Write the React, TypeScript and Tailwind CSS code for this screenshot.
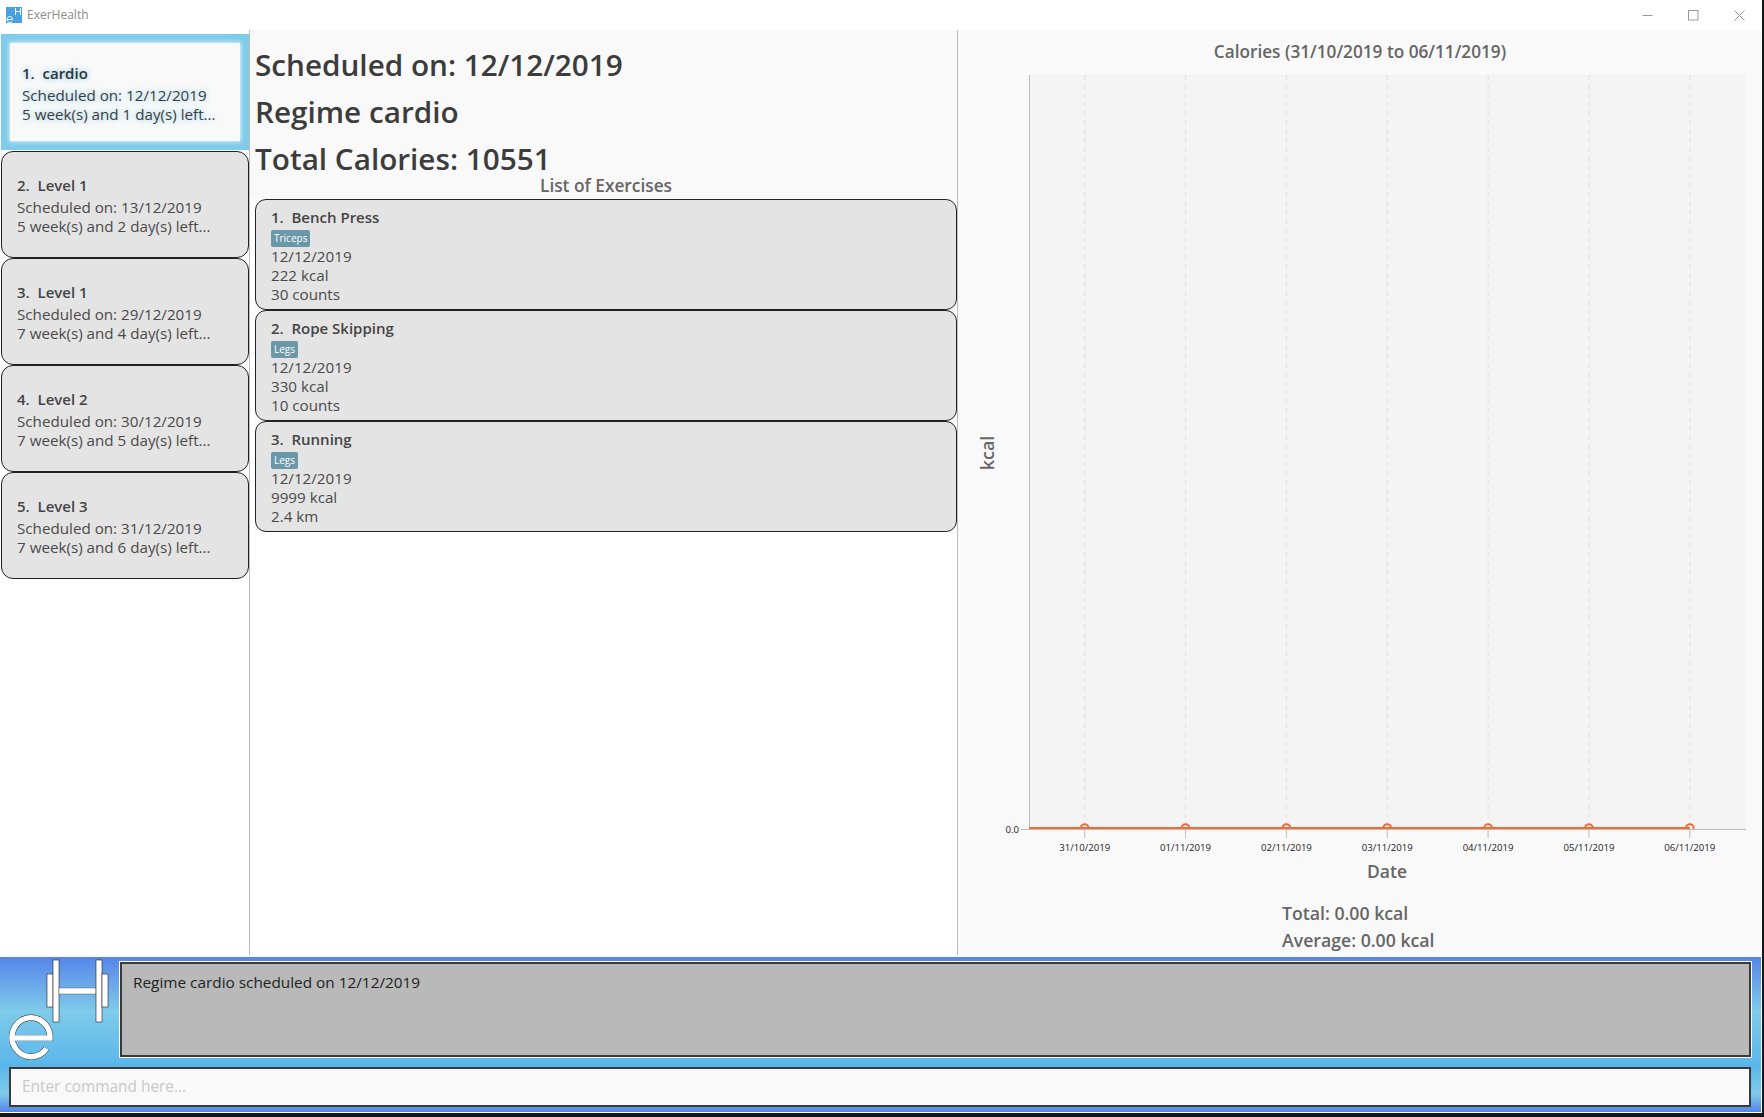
const regimes = [
  { n: "1.", name: "cardio", date: "12/12/2019", left: "5 week(s) and 1 day(s) left..." },
  { n: "2.", name: "Level 1", date: "13/12/2019", left: "5 week(s) and 2 day(s) left..." },
  { n: "3.", name: "Level 1", date: "29/12/2019", left: "7 week(s) and 4 day(s) left..." },
  { n: "4.", name: "Level 2", date: "30/12/2019", left: "7 week(s) and 5 day(s) left..." },
  { n: "5.", name: "Level 3", date: "31/12/2019", left: "7 week(s) and 6 day(s) left..." },
];

const exercises = [
  { n: "1.", name: "Bench Press", tag: "Triceps", date: "12/12/2019", kcal: "222 kcal", qty: "30 counts" },
  { n: "2.", name: "Rope Skipping", tag: "Legs", date: "12/12/2019", kcal: "330 kcal", qty: "10 counts" },
  { n: "3.", name: "Running", tag: "Legs", date: "12/12/2019", kcal: "9999 kcal", qty: "2.4 km" },
];

const days = ["31/10/2019", "01/11/2019", "02/11/2019", "03/11/2019", "04/11/2019", "05/11/2019", "06/11/2019"];

function TitleBar() {
  return (
    <div className="flex h-[30px] items-center bg-white pl-[6px]">
      <svg width="16" height="16" viewBox="0 0 16 16">
        <rect width="16" height="16" fill="#4a9fe0" />
        <path d="M9.5 1V8M14.5 1V8M9.5 4.5H14.5" stroke="#fff" strokeWidth="1" fill="none" />
        <path d="M1 12.5H6.5C6.5 10.5 5.2 9.5 3.8 9.5C2.2 9.5 1 10.8 1 12.5C1 14.2 2.2 15.5 3.8 15.5C4.9 15.5 5.8 15 6.3 14" stroke="#fff" strokeWidth="1" fill="none" />
      </svg>
      <span className="ml-[5px] text-[12px] text-[#8a8a8a]">ExerHealth</span>
      <div className="ml-auto flex items-center gap-[35px] pr-[17px]">
        <svg width="11" height="11" viewBox="0 0 11 11"><path d="M0.5 5.5H10.5" stroke="#999" /></svg>
        <svg width="11" height="11" viewBox="0 0 11 11"><rect x="0.5" y="0.5" width="9.5" height="9.5" fill="none" stroke="#999" /></svg>
        <svg width="11" height="11" viewBox="0 0 11 11"><path d="M0.5 0.5L10.5 10.5M10.5 0.5L0.5 10.5" stroke="#999" /></svg>
      </div>
    </div>
  );
}

function RegimeCard({ r, selected }: { r: (typeof regimes)[number]; selected: boolean }) {
  if (selected) {
    return (
      <div className="ml-[1px] mb-[1px] h-[116px] bg-[#7fcbea] p-[9px]">
        <div className="flex h-full flex-col justify-center bg-[#f9f9f9] pt-[2px] pl-[12px] shadow-[0_0_4px_1px_#d8f0fa]">
          <div className="mb-[2px] text-[15px] leading-[22px] font-semibold text-[#333] [text-shadow:0_0_6px_#6cc3e8]">
            {r.n}&nbsp;&nbsp;{r.name}
          </div>
          <div className="text-[15.2px] leading-[19px] text-[#3d3d3d] [text-shadow:0_0_6px_#7fcbea]">Scheduled on: {r.date}</div>
          <div className="text-[15.2px] leading-[19px] text-[#3d3d3d] [text-shadow:0_0_6px_#7fcbea]">{r.left}</div>
        </div>
      </div>
    );
  }
  return (
    <div className="ml-[1px] flex h-[107px] flex-col justify-center rounded-[12px] border-[1.5px] border-[#222] bg-[#e4e4e4] pl-[15px]">
      <div className="mb-[2px] text-[15px] leading-[22px] font-semibold text-[#444]">
        {r.n}&nbsp;&nbsp;{r.name}
      </div>
      <div className="text-[15.2px] leading-[19px] text-[#4a4a4a]">Scheduled on: {r.date}</div>
      <div className="text-[15.2px] leading-[19px] text-[#4a4a4a]">{r.left}</div>
    </div>
  );
}

function ExerciseCard({ e }: { e: (typeof exercises)[number] }) {
  return (
    <div className="flex h-[111px] flex-col rounded-[11px] border-[1.5px] border-[#222] bg-[#e4e4e4] pt-[7px] pl-[15px]">
      <div className="text-[15px] leading-[20px] font-semibold text-[#444]">
        {e.n}&nbsp;&nbsp;{e.name}
      </div>
      <div className="mt-[3px] flex">
        <span className="rounded-[2px] bg-[#6a98a9] px-[3px] text-[10px] leading-[17px] text-white">{e.tag}</span>
      </div>
      <div className="text-[15.2px] leading-[19px] text-[#4a4a4a]">{e.date}</div>
      <div className="text-[15.2px] leading-[19px] text-[#4a4a4a]">{e.kcal}</div>
      <div className="text-[15.2px] leading-[19px] text-[#4a4a4a]">{e.qty}</div>
    </div>
  );
}

function Chart() {
  return (
    <svg width="804" height="815" viewBox="958 75 804 815" className="block">
      <rect x="1029" y="75" width="717" height="754" fill="#f4f4f4" />
      {days.map((d, i) => {
        const x = 1084.7 + i * 100.85;
        return (
          <g key={d}>
            <line x1={x} y1="75" x2={x} y2="829" stroke="#e0e0e0" strokeDasharray="5 4" />
            <text x={x} y="851" textAnchor="middle" fontSize="9.6" fill="#222">{d}</text>
            <circle cx={x} cy="828" r="3.8" fill="#fff" stroke="#f66a35" strokeWidth="2" />
          </g>
        );
      })}
      <line x1="1029.5" y1="75" x2="1029.5" y2="829" stroke="#bdbdbd" />
      <line x1="1029" y1="828" x2="1690" y2="828" stroke="#f66a35" strokeWidth="2" />
      <rect x="1029" y="829" width="717" height="8" fill="#f9f9f9" />
      <line x1="1021" y1="829.5" x2="1746" y2="829.5" stroke="#bdbdbd" />
      {days.map((d, i) => (
        <line key={d} x1={1084.7 + i * 100.85} y1="830" x2={1084.7 + i * 100.85} y2="838" stroke="#bdbdbd" />
      ))}
      <text x="1019" y="833" textAnchor="end" fontSize="9.6" fill="#222">0.0</text>
      <text x="1387" y="878" textAnchor="middle" fontSize="17.5" fontWeight="600" fill="#666">Date</text>
      <text transform="translate(994 453) rotate(-90)" textAnchor="middle" fontSize="18" fontWeight="600" fill="#666">kcal</text>
    </svg>
  );
}

function Logo() {
  const e = "M3 81H41A19 19.5 0 1 0 37.5 91.5";
  return (
    <svg width="111" height="105" viewBox="0 0 111 105" className="-mt-[5px] shrink-0 self-start">
      <rect x="38" y="17" width="6" height="33" fill="#fff" stroke="#222" strokeWidth="0.6" />
      <rect x="44" y="3" width="6" height="62" fill="#fff" stroke="#222" strokeWidth="0.6" />
      <rect x="50" y="31" width="37" height="6" fill="#fff" stroke="#444" strokeWidth="0.4" />
      <rect x="87" y="3" width="6" height="62" fill="#fff" stroke="#222" strokeWidth="0.6" />
      <rect x="93" y="17" width="6" height="33" fill="#fff" stroke="#222" strokeWidth="0.6" />
      <path d={e} fill="none" stroke="#222" strokeWidth="6.2" />
      <path d={e} fill="none" stroke="#fff" strokeWidth="5.4" />
    </svg>
  );
}

export default function App() {
  return (
    <div className="flex h-[1117px] w-[1764px] flex-col bg-[#14181c] pr-[2px] font-['Open_Sans',sans-serif]">
      <TitleBar />
      <div className="flex h-[927px] bg-[#f9f9f9]">
        <div className="mb-[2px] flex w-[250px] flex-col rounded-bl-[6px] border-r border-[#bdbdbd] bg-white pt-[4px]">
          {regimes.map((r, i) => (
            <RegimeCard key={r.n} r={r} selected={i === 0} />
          ))}
        </div>
        <div className="mb-[2px] flex w-[708px] flex-col rounded-bl-[6px] border-r border-[#bdbdbd] bg-white">
          <div className="bg-[#f9f9f9] pt-[11px] pl-[5px]">
            <div className="text-[29.7px] leading-[47px] font-semibold text-[#3c3c3c]">Scheduled on: 12/12/2019</div>
            <div className="text-[29.7px] leading-[47px] font-semibold text-[#3c3c3c]">Regime cardio</div>
            <div className="text-[29.7px] leading-[47px] font-semibold text-[#3c3c3c]">Total Calories: 10551</div>
            <div className="-mt-[8px] pb-[1px] text-center text-[17.3px] leading-[24px] font-semibold text-[#666]">List of Exercises</div>
          </div>
          <div className="pl-[5px]">
            {exercises.map((e) => (
              <ExerciseCard key={e.n} e={e} />
            ))}
          </div>
        </div>
        <div className="flex flex-1 flex-col">
          <div className="h-[45px] pt-[10px] text-center text-[17.2px] leading-[24px] font-semibold text-[#666]">
            Calories (31/10/2019 to 06/11/2019)
          </div>
          <Chart />
          <div className="pt-[10px] pl-[324px] text-[17.7px] leading-[27px] font-semibold text-[#666]">
            <div>Total: 0.00 kcal</div>
            <div>Average: 0.00 kcal</div>
          </div>
        </div>
      </div>
      <div className="flex h-[156px] flex-col gap-[10px] border-r border-b border-white bg-[linear-gradient(#5585e8,#7fcbea_35%,#5ab6ea_70%,#7fcbea_88%,#5585e8)] pt-[5px] pr-[10px] pl-[9px]">
        <div className="flex h-[95px]">
          <Logo />
          <div className="h-[95px] flex-1 border-2 border-[#3a3a3a] bg-[#b9b9b9] px-[11px] py-[7px] text-[15.35px] leading-[22px] text-[#222] outline outline-white">
            Regime cardio scheduled on 12/12/2019
          </div>
        </div>
        <div className="flex h-[40px] items-center border-2 border-[#3a3a3a] bg-[#f9f9f9] px-[11px] text-[15.4px] text-[#c8c8c8]">
          Enter command here...
        </div>
      </div>
      <div className="h-[4px]" />
    </div>
  );
}
